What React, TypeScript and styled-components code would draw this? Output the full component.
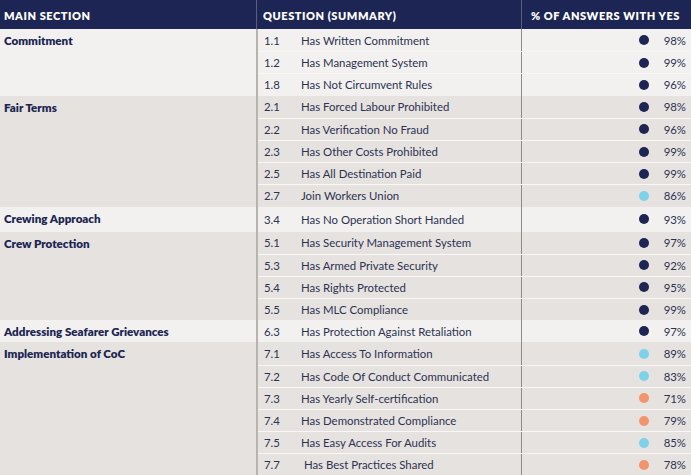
import styled, { createGlobalStyle } from "styled-components";

const GlobalStyle = createGlobalStyle`
  html, body { margin: 0; padding: 0; background: #ebe8e5; }
  body { font-family: Lato, "Open Sans", sans-serif; }
`;

type Dot = "navy" | "blue" | "orange";

interface Question {
    num: string;
    text: string;
    pct: number;
    dot: Dot;
}

interface Section {
    name: string;
    shade: "light" | "dark";
    tall?: boolean;
    rows: Question[];
}

const dotColors: Record<Dot, string> = {
    navy: "#1c2553",
    blue: "#7dd2ea",
    orange: "#f2956c",
};

const sections: Section[] = [
    {
        name: "Commitment", shade: "light", rows: [
            { num: "1.1", text: "Has Written Commitment", pct: 98, dot: "navy" },
            { num: "1.2", text: "Has Management System", pct: 99, dot: "navy" },
            { num: "1.8", text: "Has Not Circumvent Rules", pct: 96, dot: "navy" },
        ]
    },
    {
        name: "Fair Terms", shade: "dark", rows: [
            { num: "2.1", text: "Has Forced Labour Prohibited", pct: 98, dot: "navy" },
            { num: "2.2", text: "Has Verification No Fraud", pct: 96, dot: "navy" },
            { num: "2.3", text: "Has Other Costs Prohibited", pct: 99, dot: "navy" },
            { num: "2.5", text: "Has All Destination Paid", pct: 99, dot: "navy" },
            { num: "2.7", text: "Join Workers Union", pct: 86, dot: "blue" },
        ]
    },
    {
        name: "Crewing Approach", shade: "light", tall: true, rows: [
            { num: "3.4", text: "Has No Operation Short Handed", pct: 93, dot: "navy" },
        ]
    },
    {
        name: "Crew Protection", shade: "dark", rows: [
            { num: "5.1", text: "Has Security Management System", pct: 97, dot: "navy" },
            { num: "5.3", text: "Has Armed Private Security", pct: 92, dot: "navy" },
            { num: "5.4", text: "Has Rights Protected", pct: 95, dot: "navy" },
            { num: "5.5", text: "Has MLC Compliance", pct: 99, dot: "navy" },
        ]
    },
    {
        name: "Addressing Seafarer Grievances", shade: "light", rows: [
            { num: "6.3", text: "Has Protection Against Retaliation", pct: 97, dot: "navy" },
        ]
    },
    {
        name: "Implementation of CoC", shade: "dark", rows: [
            { num: "7.1", text: "Has Access To Information", pct: 89, dot: "blue" },
            { num: "7.2", text: "Has Code Of Conduct Communicated", pct: 83, dot: "blue" },
            { num: "7.3", text: "Has Yearly Self-certification", pct: 71, dot: "orange" },
            { num: "7.4", text: "Has Demonstrated Compliance", pct: 79, dot: "orange" },
            { num: "7.5", text: "Has Easy Access For Audits", pct: 85, dot: "blue" },
            { num: "7.7", text: " Has Best Practices Shared", pct: 78, dot: "orange" },
        ]
    },
];

const Table = styled.div`
  width: 691px;
  height: 475px;
  overflow: hidden;
`;

const Header = styled.div`
  display: grid;
  grid-template-columns: 256px 265px 1fr;
  height: 29px;
  background: #1c2553;
  color: #ffffff;
  font-weight: 800;
  font-size: 11px;
  letter-spacing: 0.55px;
  white-space: nowrap;
`;

const HeadCell = styled.div<{ $divider?: boolean; $indent?: number }>`
  display: flex;
  align-items: center;
  padding-left: ${(p) => p.$indent ?? 4}px;
  border-left: ${(p) => (p.$divider ? "1px solid #5a5f80" : "none")};
  padding-top: 1px;
`;

const Group = styled.div<{ $shade: "light" | "dark" }>`
  display: flex;
  background: ${(p) => (p.$shade === "light" ? "#f2f1ef" : "#e6e2df")};
`;

const SectionName = styled.div`
  width: 252px;
  padding: 5px 0 0 4px;
  font-weight: 800;
  font-size: 11.6px;
  color: #1c2553;
  line-height: 14px;
  border-right: 2px solid #b7b3af;
`;

const Rows = styled.div`
  flex: 1;
  display: flex;
  flex-direction: column;
`;

const Row = styled.div<{ $tall?: boolean; $first: boolean }>`
  display: grid;
  grid-template-columns: 264px 1fr;
  height: ${(p) => (p.$tall ? "25px" : "22.2px")};
  box-sizing: border-box;
  border-top: ${(p) => (p.$first ? "none" : "1px solid #f9f8f7")};
  font-size: 11.4px;
  color: #2c3252;
`;

const QuestionCell = styled.div`
  display: flex;
  align-items: center;
  padding-left: 6px;
  border-right: 1px solid #8e8b89;
`;

const Num = styled.span`
  width: 37px;
  flex-shrink: 0;
`;

const Text = styled.span`
  white-space: pre;
`;

const PctCell = styled.div`
  display: flex;
  align-items: center;
  justify-content: flex-end;
  padding-right: 5px;
`;

const Marker = styled.span<{ $color: string }>`
  width: 10px;
  height: 10px;
  border-radius: 50%;
  background: ${(p) => p.$color};
  margin-right: 12px;
`;

const Pct = styled.span`
  width: 25px;
  text-align: right;
`;

function App() {
    return (
        <>
            <GlobalStyle />
            <Table>
                <Header>
                    <HeadCell>MAIN SECTION</HeadCell>
                    <HeadCell $divider $indent={6}>QUESTION (SUMMARY)</HeadCell>
                    <HeadCell $divider $indent={9}>% OF ANSWERS WITH YES</HeadCell>
                </Header>
                {sections.map((s) => (
                    <Group key={s.name} $shade={s.shade}>
                        <SectionName>{s.name}</SectionName>
                        <Rows>
                            {s.rows.map((r, i) => (
                                <Row key={r.num} $tall={s.tall} $first={i === 0}>
                                    <QuestionCell>
                                        <Num>{r.num}</Num>
                                        <Text>{r.text}</Text>
                                    </QuestionCell>
                                    <PctCell>
                                        <Marker $color={dotColors[r.dot]} />
                                        <Pct>{r.pct}%</Pct>
                                    </PctCell>
                                </Row>
                            ))}
                        </Rows>
                    </Group>
                ))}
            </Table>
        </>
    );
}

export default App;
